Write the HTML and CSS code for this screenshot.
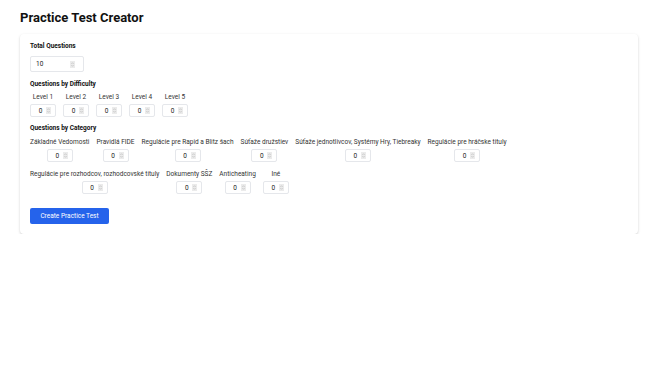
FILE: index.html
```html
<!DOCTYPE html>
<html lang="sk">
<head>
<meta charset="utf-8">
<title>Practice Test Creator</title>
<link rel="stylesheet" href="styles.css">
</head>
<body>
<div class="page">
  <h1 class="title">Practice Test Creator</h1>
  <div class="card">
    <div class="heading">Total Questions</div>
    <div class="num num-wide"><span class="val">10</span><svg class="spin" viewBox="0 0 10 14"><rect width="10" height="14" fill="#ebebeb"/><path d="M3 5.5L5 3.5L7 5.5M3 8.5L5 10.5L7 8.5" fill="none" stroke="#9a9a9a" stroke-width="1"/></svg></div>

    <div class="heading h-diff">Questions by Difficulty</div>
    <div class="items">
      <div class="item"><span class="lbl">Level 1</span><div class="num"><span class="val">0</span><svg class="spin" viewBox="0 0 10 14"><rect width="10" height="14" fill="#ebebeb"/><path d="M3 5.5L5 3.5L7 5.5M3 8.5L5 10.5L7 8.5" fill="none" stroke="#9a9a9a" stroke-width="1"/></svg></div></div>
      <div class="item"><span class="lbl">Level 2</span><div class="num"><span class="val">0</span><svg class="spin" viewBox="0 0 10 14"><rect width="10" height="14" fill="#ebebeb"/><path d="M3 5.5L5 3.5L7 5.5M3 8.5L5 10.5L7 8.5" fill="none" stroke="#9a9a9a" stroke-width="1"/></svg></div></div>
      <div class="item"><span class="lbl">Level 3</span><div class="num"><span class="val">0</span><svg class="spin" viewBox="0 0 10 14"><rect width="10" height="14" fill="#ebebeb"/><path d="M3 5.5L5 3.5L7 5.5M3 8.5L5 10.5L7 8.5" fill="none" stroke="#9a9a9a" stroke-width="1"/></svg></div></div>
      <div class="item"><span class="lbl">Level 4</span><div class="num"><span class="val">0</span><svg class="spin" viewBox="0 0 10 14"><rect width="10" height="14" fill="#ebebeb"/><path d="M3 5.5L5 3.5L7 5.5M3 8.5L5 10.5L7 8.5" fill="none" stroke="#9a9a9a" stroke-width="1"/></svg></div></div>
      <div class="item"><span class="lbl">Level 5</span><div class="num"><span class="val">0</span><svg class="spin" viewBox="0 0 10 14"><rect width="10" height="14" fill="#ebebeb"/><path d="M3 5.5L5 3.5L7 5.5M3 8.5L5 10.5L7 8.5" fill="none" stroke="#9a9a9a" stroke-width="1"/></svg></div></div>
    </div>

    <div class="heading h-cat">Questions by Category</div>
    <div class="items cats">
      <div class="item"><span class="lbl">Základné Vedomosti</span><div class="num"><span class="val">0</span><svg class="spin" viewBox="0 0 10 14"><rect width="10" height="14" fill="#ebebeb"/><path d="M3 5.5L5 3.5L7 5.5M3 8.5L5 10.5L7 8.5" fill="none" stroke="#9a9a9a" stroke-width="1"/></svg></div></div>
      <div class="item"><span class="lbl">Pravidlá FIDE</span><div class="num"><span class="val">0</span><svg class="spin" viewBox="0 0 10 14"><rect width="10" height="14" fill="#ebebeb"/><path d="M3 5.5L5 3.5L7 5.5M3 8.5L5 10.5L7 8.5" fill="none" stroke="#9a9a9a" stroke-width="1"/></svg></div></div>
      <div class="item"><span class="lbl">Regulácie pre Rapid a Blitz šach</span><div class="num"><span class="val">0</span><svg class="spin" viewBox="0 0 10 14"><rect width="10" height="14" fill="#ebebeb"/><path d="M3 5.5L5 3.5L7 5.5M3 8.5L5 10.5L7 8.5" fill="none" stroke="#9a9a9a" stroke-width="1"/></svg></div></div>
      <div class="item"><span class="lbl">Súťaže družstiev</span><div class="num"><span class="val">0</span><svg class="spin" viewBox="0 0 10 14"><rect width="10" height="14" fill="#ebebeb"/><path d="M3 5.5L5 3.5L7 5.5M3 8.5L5 10.5L7 8.5" fill="none" stroke="#9a9a9a" stroke-width="1"/></svg></div></div>
      <div class="item"><span class="lbl">Súťaže jednotlivcov, Systémy Hry, Tiebreaky</span><div class="num"><span class="val">0</span><svg class="spin" viewBox="0 0 10 14"><rect width="10" height="14" fill="#ebebeb"/><path d="M3 5.5L5 3.5L7 5.5M3 8.5L5 10.5L7 8.5" fill="none" stroke="#9a9a9a" stroke-width="1"/></svg></div></div>
      <div class="item"><span class="lbl">Regulácie pre hráčske tituly</span><div class="num"><span class="val">0</span><svg class="spin" viewBox="0 0 10 14"><rect width="10" height="14" fill="#ebebeb"/><path d="M3 5.5L5 3.5L7 5.5M3 8.5L5 10.5L7 8.5" fill="none" stroke="#9a9a9a" stroke-width="1"/></svg></div></div>
      <div class="item"><span class="lbl">Regulácie pre rozhodcov, rozhodcovské tituly</span><div class="num"><span class="val">0</span><svg class="spin" viewBox="0 0 10 14"><rect width="10" height="14" fill="#ebebeb"/><path d="M3 5.5L5 3.5L7 5.5M3 8.5L5 10.5L7 8.5" fill="none" stroke="#9a9a9a" stroke-width="1"/></svg></div></div>
      <div class="item"><span class="lbl">Dokumenty SŠZ</span><div class="num"><span class="val">0</span><svg class="spin" viewBox="0 0 10 14"><rect width="10" height="14" fill="#ebebeb"/><path d="M3 5.5L5 3.5L7 5.5M3 8.5L5 10.5L7 8.5" fill="none" stroke="#9a9a9a" stroke-width="1"/></svg></div></div>
      <div class="item"><span class="lbl">Anticheating</span><div class="num"><span class="val">0</span><svg class="spin" viewBox="0 0 10 14"><rect width="10" height="14" fill="#ebebeb"/><path d="M3 5.5L5 3.5L7 5.5M3 8.5L5 10.5L7 8.5" fill="none" stroke="#9a9a9a" stroke-width="1"/></svg></div></div>
      <div class="item"><span class="lbl">Iné</span><div class="num"><span class="val">0</span><svg class="spin" viewBox="0 0 10 14"><rect width="10" height="14" fill="#ebebeb"/><path d="M3 5.5L5 3.5L7 5.5M3 8.5L5 10.5L7 8.5" fill="none" stroke="#9a9a9a" stroke-width="1"/></svg></div></div>
    </div>

    <button class="btn" type="button">Create Practice Test</button>
  </div>
</div>
</body>
</html>
```

FILE: styles.css
```css
body {
  margin: 0;
  background: #ffffff;
  font-family: Roboto, "Noto Sans", sans-serif;
  color: #374151;
}

.page {
  padding: 10px 22px 0 20px;
}

.title {
  margin: 0 0 8px;
  font-size: 13px;
  line-height: 16px;
  font-weight: 700;
  color: #111111;
}

.card {
  background: #ffffff;
  border-radius: 4px;
  box-shadow: 0 1px 3px rgba(0, 0, 0, 0.14), 0 1px 2px rgba(0, 0, 0, 0.06);
  padding: 8px 10px 10px;
}

.heading {
  font-size: 6.5px;
  line-height: 8px;
  font-weight: 700;
  color: #111111;
}

.h-diff {
  margin-top: 8px;
}

.h-cat {
  margin-top: 7px;
}

.items {
  display: flex;
  flex-wrap: wrap;
  column-gap: 7px;
  row-gap: 8px;
  margin-top: 5px;
}

.cats {
  margin-top: 6px;
}

.item {
  display: flex;
  flex-direction: column;
  align-items: center;
  gap: 3px;
}

.lbl {
  font-size: 6.5px;
  line-height: 8px;
  color: #333333;
  white-space: nowrap;
}

.num {
  box-sizing: border-box;
  width: 26px;
  height: 13px;
  border: 1px solid #e5e7eb;
  border-radius: 2px;
  display: flex;
  align-items: center;
  padding: 0 4px;
  background: #ffffff;
}

.num .val {
  flex: 1;
  text-align: center;
  font-size: 6.5px;
  line-height: 8px;
  color: #222222;
}

.num-wide {
  width: 54px;
  height: 16px;
  margin-top: 6px;
  padding: 0 8px 0 5px;
}

.num-wide .val {
  text-align: left;
}

.spin {
  width: 5px;
  height: 7px;
  flex: none;
  display: block;
}

.btn {
  display: block;
  margin-top: 14px;
  width: 79px;
  height: 16px;
  border: none;
  border-radius: 2px;
  background: #2563eb;
  color: #ffffff;
  font-family: Roboto, "Noto Sans", sans-serif;
  font-size: 6.5px;
  line-height: 16px;
  padding: 0;
  text-align: center;
}
```
